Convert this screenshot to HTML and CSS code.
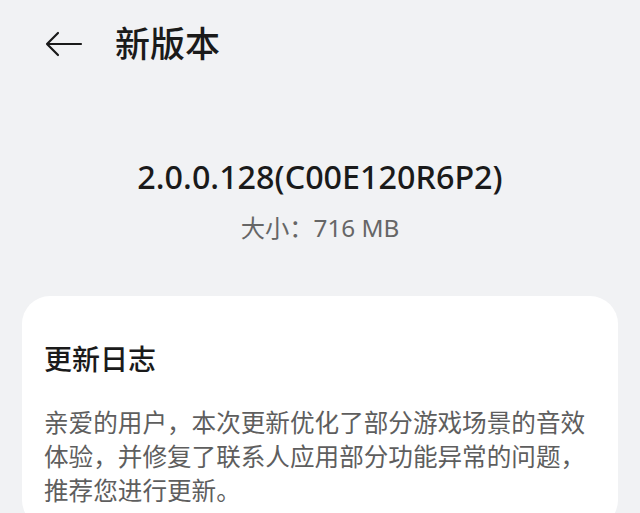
FILE: index.html
```html
<!DOCTYPE html>
<html lang="zh-CN">
<head>
<meta charset="utf-8">
<title>新版本</title>
<link rel="stylesheet" href="styles.css">
</head>
<body>
<header class="topbar">
  <svg class="back" width="38" height="26" viewBox="0 0 38 26" aria-hidden="true">
    <path d="M36 13 H2 M13 2 L2 13 L13 24" fill="none" stroke="#1a1a1a" stroke-width="2.2" stroke-linecap="round" stroke-linejoin="round"/>
  </svg>
  <h1 class="title">新版本</h1>
</header>
<section class="info">
  <div class="version">2.0.0.128(C00E120R6P2)</div>
  <div class="size">大小：716 MB</div>
</section>
<section class="card">
  <h2 class="card-title">更新日志</h2>
  <p class="card-text">亲爱的用户，本次更新优化了部分游戏场景的音效<br>体验，并修复了联系人应用部分功能异常的问题，<br>推荐您进行更新。</p>
</section>
</body>
</html>
```
FILE: styles.css
```css
html, body {
  margin: 0;
  padding: 0;
}
body {
  background: #f1f2f4;
  font-family: "Noto Sans", "Noto Sans CJK SC", sans-serif;
  color: #1a1a1a;
  width: 640px;
  height: 513px;
  overflow: hidden;
}
.topbar {
  height: 88px;
  display: flex;
  align-items: center;
  padding-left: 45px;
  gap: 32px;
}
.back {
  display: block;
}
.title {
  margin: 0;
  font-size: 35px;
  font-weight: 500;
  line-height: 40px;
}
.info {
  padding-top: 68px;
  display: flex;
  flex-direction: column;
  align-items: center;
}
.version {
  font-size: 32.3px;
  font-weight: 500;
  line-height: 40px;
}
.size {
  margin-top: 16px;
  font-size: 24.3px;
  line-height: 32px;
  color: #666;
}
.card {
  margin: 52px 22px 0;
  background: #fff;
  border-radius: 28px;
  padding: 45px 4px 20px 22px;
}
.card-title {
  margin: 0;
  font-size: 28px;
  font-weight: 500;
  line-height: 36px;
}
.card-text {
  margin: 29px 0 0;
  font-size: 24.6px;
  line-height: 34px;
  color: #5e5e5e;
  white-space: nowrap;
}
```
